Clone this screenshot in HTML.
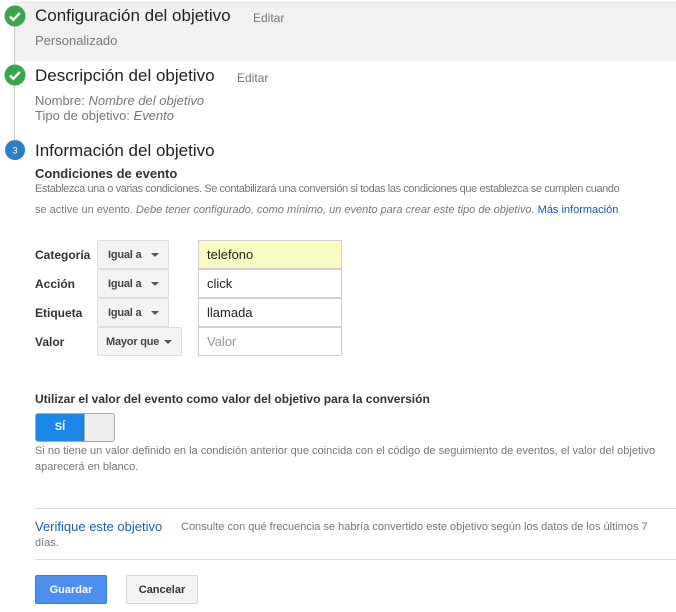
<!DOCTYPE html>
<html><head><meta charset="utf-8"><style>
*{margin:0;padding:0;box-sizing:border-box}
body{width:676px;height:612px;background:#fff;font-family:"Liberation Sans",Arial,sans-serif;position:relative;overflow:hidden;color:#222}
.a{position:absolute;white-space:nowrap}
.h{font-size:17px;color:#222}
.ed{font-size:12px;color:#777}
.g{color:#777}
.lbl{font-size:12px;font-weight:bold;color:#333}
.sel{position:absolute;height:29px;background:#f3f3f3;border:1px solid #ddd;border-radius:2px;font-size:11px;font-weight:bold;color:#444;padding:8px 0 0 10px;letter-spacing:-0.2px}
.sel:after{content:"";position:absolute;right:9px;top:12px;border-left:4px solid transparent;border-right:4px solid transparent;border-top:4px solid #555}
.inp{position:absolute;left:198px;width:144px;height:29px;border:1px solid #d0d0d0;font-size:13px;padding:6px 0 0 8px;color:#222}
.hr{position:absolute;left:35px;right:0;height:1px;background:#ddd}
</style></head><body>
<div class="a" style="left:14px;top:2px;width:662px;height:59px;background:#f1f1f1;border-top:1px solid #e6e6e6"></div>
<div class="a" style="left:14px;top:20px;width:1px;height:130px;background:#ccc"></div>
<svg class="a" style="left:4px;top:5px" width="22" height="22"><circle cx="11" cy="11" r="10.5" fill="#3aa64a"/><path d="M6 11.5l3.3 3.3 6.5-6.8" stroke="#fff" stroke-width="2.4" fill="none"/></svg>
<svg class="a" style="left:4px;top:64px" width="22" height="22"><circle cx="11" cy="11" r="10.5" fill="#3aa64a"/><path d="M6 11.5l3.3 3.3 6.5-6.8" stroke="#fff" stroke-width="2.4" fill="none"/></svg>
<svg class="a" style="left:5px;top:140px" width="20" height="20"><circle cx="10" cy="10" r="10" fill="#2a7fc7"/><text x="10" y="13.5" font-size="9" fill="#fff" text-anchor="middle" font-family="Liberation Sans">3</text></svg>
<div class="a h" style="left:35px;top:6px">Configuración del objetivo</div>
<div class="a ed" style="left:253px;top:11px">Editar</div>
<div class="a g" style="left:35px;top:33px;font-size:13px">Personalizado</div>
<div class="a h" style="left:35px;top:66px">Descripción del objetivo</div>
<div class="a ed" style="left:237px;top:71px">Editar</div>
<div class="a g" style="left:35px;top:93px;font-size:13px">Nombre: <i>Nombre del objetivo</i></div>
<div class="a g" style="left:35px;top:108px;font-size:13px">Tipo de objetivo: <i>Evento</i></div>
<div class="a h" style="left:35px;top:141px">Información del objetivo</div>
<div class="a" style="left:35px;top:166px;font-size:13px;font-weight:bold;color:#333">Condiciones de evento</div>
<div class="a g" style="left:35px;top:183px;font-size:11px;letter-spacing:-0.4px">Establezca una o varias condiciones. Se contabilizará una conversión si todas las condiciones que establezca se cumplen cuando</div>
<div class="a g" style="left:35px;top:204px;font-size:11px">se active un evento. <i>Debe tener configurado, como mínimo, un evento para crear este tipo de objetivo.</i> <span style="color:#15c">Más información</span></div>

<div class="a lbl" style="left:35px;top:248px">Categoría</div>
<div class="a lbl" style="left:35px;top:277px">Acción</div>
<div class="a lbl" style="left:35px;top:306px">Etiqueta</div>
<div class="a lbl" style="left:35px;top:335px">Valor</div>
<div class="sel" style="left:97px;top:240px;width:72px">Igual a</div>
<div class="sel" style="left:97px;top:269px;width:72px">Igual a</div>
<div class="sel" style="left:97px;top:298px;width:72px">Igual a</div>
<div class="sel" style="left:97px;top:327px;width:85px;padding-left:8px">Mayor que</div>
<div class="inp" style="top:240px;background:#fbfbc4">telefono</div>
<div class="inp" style="top:269px">click</div>
<div class="inp" style="top:298px">llamada</div>
<div class="inp" style="top:327px;color:#999">Valor</div>

<div class="a" style="left:35px;top:392px;font-size:12px;font-weight:bold;color:#333">Utilizar el valor del evento como valor del objetivo para la conversión</div>
<div class="a" style="left:35px;top:413px;width:80px;height:29px;border:1px solid #aaa;border-radius:3px;overflow:hidden;background:#eee">
<div style="position:absolute;left:0;top:0;width:48px;height:29px;background:#1a86e8;color:#fff;font-size:11px;font-weight:bold;text-align:center;line-height:27px">SÍ</div>
<div style="position:absolute;left:48px;top:0;width:1px;height:29px;background:#aaa"></div></div>
<div class="a g" style="left:35px;top:445px;font-size:11px">Si no tiene un valor definido en la condición anterior que coincida con el código de seguimiento de eventos, el valor del objetivo</div>
<div class="a g" style="left:35px;top:461px;font-size:11px">aparecerá en blanco.</div>
<div class="hr" style="top:508px"></div>
<div class="a" style="left:35px;top:519px;font-size:13px;color:#1a63a8">Verifique este objetivo</div>
<div class="a g" style="left:181px;top:521px;font-size:11px">Consulte con qué frecuencia se habría convertido este objetivo según los datos de los últimos 7</div>
<div class="a g" style="left:35px;top:537px;font-size:11px">días.</div>
<div class="hr" style="top:559px"></div>
<div class="a" style="left:35px;top:575px;width:72px;height:29px;background:#4d8ff0;border:1px solid #3a7be0;border-radius:2px;color:#fff;font-size:11px;font-weight:bold;text-align:center;line-height:29px">Guardar</div>
<div class="a" style="left:126px;top:575px;width:72px;height:29px;background:#f3f3f3;border:1px solid #d6d6d6;border-radius:2px;color:#333;font-size:11px;font-weight:bold;text-align:center;line-height:29px">Cancelar</div>
</body></html>
